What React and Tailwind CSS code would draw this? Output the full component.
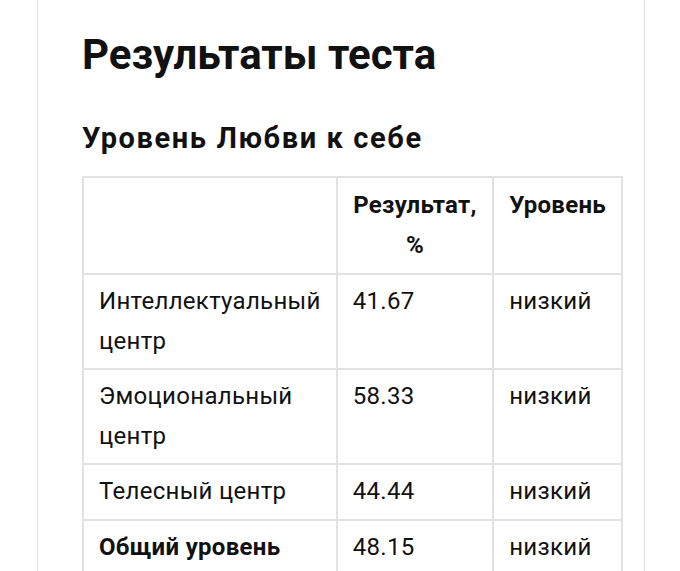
import React from "react";

const rows = [
  { name: "Интеллектуальный центр", value: "41.67", level: "низкий" },
  { name: "Эмоциональный центр", value: "58.33", level: "низкий" },
  { name: "Телесный центр", value: "44.44", level: "низкий" },
  { name: "Общий уровень", value: "48.15", level: "низкий", bold: true },
];

const App = () => {
  return (
    <div className="min-h-[571px] bg-white font-['Roboto',sans-serif] text-[#111]">
      <div className="ml-[37px] w-[608px] min-h-[571px] border-x border-[#e4e4e4] px-[44px] pt-[30px]">
        <h1 className="text-[42px] font-bold leading-[50px]">Результаты теста</h1>
        <h2 className="mt-[40px] text-[29px] font-bold leading-[36px] tracking-[1.6px]">Уровень Любви к себе</h2>
        <table className="mt-[20px] w-[541px] border-collapse text-[24px] leading-[39.5px] tracking-[0.3px]">
          <colgroup>
            <col className="w-[254px]" />
            <col className="w-[159px]" />
            <col className="w-[128px]" />
          </colgroup>
          <thead>
            <tr>
              <th className="border-2 border-[#e2e2e2] px-[15px] py-[8px] align-top"></th>
              <th className="border-2 border-[#e2e2e2] px-[15px] py-[8px] align-top text-center font-bold">Результат, %</th>
              <th className="border-2 border-[#e2e2e2] px-[15px] py-[8px] align-top text-center font-bold">Уровень</th>
            </tr>
          </thead>
          <tbody>
            {rows.map((r) => (
              <tr key={r.name}>
                <td className={`border-2 border-[#e2e2e2] px-[15px] py-[7px] align-top ${r.bold ? "font-bold" : ""}`}>{r.name}</td>
                <td className="border-2 border-[#e2e2e2] px-[15px] py-[7px] align-top">{r.value}</td>
                <td className="border-2 border-[#e2e2e2] px-[15px] py-[7px] align-top">{r.level}</td>
              </tr>
            ))}
          </tbody>
        </table>
      </div>
    </div>
  );
};

export default App;
